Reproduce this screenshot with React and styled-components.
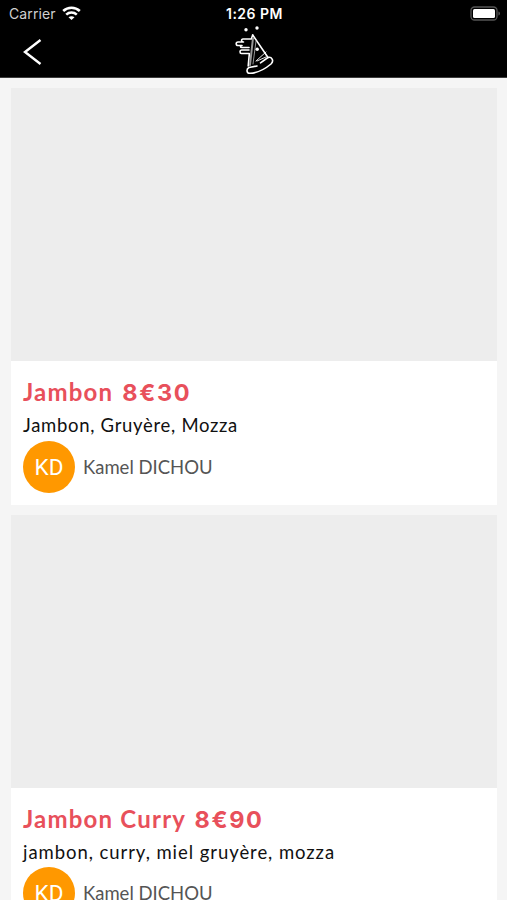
import React from 'react'
import styled, { createGlobalStyle } from 'styled-components'

const GlobalStyle = createGlobalStyle`
  * {
    box-sizing: border-box;
  }

  body {
    margin: 0;
    background: #f5f5f5;
    font-family: Lato, 'Liberation Sans', sans-serif;
  }
`

const Screen = styled.div`
  width: 100%;
  height: 900px;
  overflow: hidden;
  background: #f5f5f5;
`

const Header = styled.header`
  height: 78px;
  background: #000;
  border-bottom: 1px solid #3c3c3c;
`

const StatusBar = styled.div`
  display: grid;
  grid-template-columns: 1fr auto 1fr;
  align-items: center;
  height: 27px;
  padding: 0 7px 0 9px;
  font-family: Inter, 'Liberation Sans', sans-serif;
  color: #fff;
`

const Carrier = styled.div`
  display: flex;
  align-items: center;
  gap: 6px;
  font-size: 14px;
  letter-spacing: 0.1px;
  color: #d0d0d0;
`

const Time = styled.div`
  font-size: 14px;
  font-weight: 600;
  letter-spacing: 0.5px;
`

const Battery = styled.svg`
  justify-self: end;
`

const NavBar = styled.nav`
  display: grid;
  grid-template-columns: 1fr auto 1fr;
  height: 50px;
`

const BackButton = styled.button`
  justify-self: start;
  display: flex;
  padding: 11px 0 0 22px;
  border: 0;
  background: none;
`

const LogoMark = styled.svg`
  overflow: visible;
`

const List = styled.main`
  display: flex;
  flex-direction: column;
  gap: 10px;
  padding: 10px 10px 0 11px;
`

const Card = styled.article`
  background: #fff;
`

const Photo = styled.div`
  height: 273px;
  background: #ededed;
`

const Details = styled.div`
  height: 143.5px;
  padding: 15px 12px 0;
`

const Title = styled.h2`
  width: max-content;
  margin: 0;
  font-size: 24px;
  font-weight: 700;
  line-height: 32px;
  letter-spacing: 1.2px;
  color: #e8505b;
`

const Price = styled.span`
  margin-left: 2px;
  font-family: Inter, 'Liberation Sans', sans-serif;
  font-size: 23.5px;
  line-height: 1;
  letter-spacing: 1.6px;
`

const Ingredients = styled.p`
  width: max-content;
  margin: 5px 0 3.5px;
  font-size: 18.5px;
  line-height: 24px;
  letter-spacing: ${({ $spacing }) => $spacing}px;
  color: #111;
`

const Author = styled.div`
  display: flex;
  align-items: center;
  gap: 8px;
`

const Avatar = styled.div`
  display: flex;
  align-items: center;
  justify-content: center;
  width: 52px;
  height: 52px;
  border-radius: 50%;
  background: #ff9800;
  font-family: Roboto, 'Liberation Sans', sans-serif;
  font-size: 22.5px;
  font-weight: 400;
  color: #fff;
`

const AuthorName = styled.span`
  font-size: 18.5px;
  letter-spacing: 0;
  color: #555;
`

const pizzas = [
  { name: 'Jambon', price: '8€30', ingredients: 'Jambon, Gruyère, Mozza', spacing: 0.7 },
  { name: 'Jambon Curry', price: '8€90', ingredients: 'jambon, curry, miel gruyère, mozza', spacing: 0.94 },
]

function Wifi() {
  return (
    <svg width="19" height="15" viewBox="0 0 19 15" fill="none" stroke="#fff" strokeWidth="2.6">
      <path d="M1.2 5C5.8 .6 13.2 .6 17.8 5" />
      <path d="M4.2 8.6C7.2 5.8 11.8 5.8 14.8 8.6" />
      <path d="M6.5 11.2C8.2 9.8 10.8 9.8 12.5 11.2L9.5 14.1Z" fill="#fff" stroke="none" />
    </svg>
  )
}

function Logo() {
  return (
    <LogoMark width="44" height="51" viewBox="0 3 44 51" fill="none" stroke="#fff" strokeWidth="1.6" strokeLinecap="round" strokeLinejoin="round">
      <circle cx="14" cy="5.7" r="1.7" fill="#fff" stroke="none" />
      <circle cx="25" cy="4" r="1.7" fill="#fff" stroke="none" />
      {/* pizza slice */}
      <path d="M20.7 11L36 33.5M17.3 30L16.2 42" />
      {/* melted cheese */}
      <path d="M20.7 11L19.3 15H11C9 15 9 18 11.5 18H6C3.6 18 3.6 21.5 6 21.5H10C8 22 8 23.5 10 23.5H17M17 26H9.5C7.5 26 7.5 29.5 9.5 29.5H17.3" />
      <path d="M21 14L18 41" stroke="#999" strokeWidth="2" />
      <path d="M24 17L21 40" stroke="#bbb" strokeWidth="0.8" />
      <circle cx="25.2" cy="25.3" r="1.7" fill="#fff" stroke="none" />
      <path d="M24 37L34 28M25 37L34 33" strokeWidth="0.9" />
      {/* crust */}
      <path d="M25 42L17 43.5C14 45 14.5 49.5 18 49.3C25 49 33 45 39 40C42.5 36.5 39.5 32.5 36 33.5L28.5 38.8" />
    </LogoMark>
  )
}

function PizzaCard({ pizza }) {
  return (
    <Card>
      <Photo />
      <Details>
        <Title>
          {pizza.name} <Price>{pizza.price}</Price>
        </Title>
        <Ingredients $spacing={pizza.spacing}>{pizza.ingredients}</Ingredients>
        <Author>
          <Avatar>KD</Avatar>
          <AuthorName>Kamel DICHOU</AuthorName>
        </Author>
      </Details>
    </Card>
  )
}

export default function App() {
  return (
    <Screen>
      <GlobalStyle />
      <Header>
        <StatusBar>
          <Carrier>
            Carrier
            <Wifi />
          </Carrier>
          <Time>1:26 PM</Time>
          <Battery width="30" height="15" viewBox="0 0 30 15">
            <rect x="1" y="1" width="26" height="13" rx="3.5" fill="none" stroke="#555" strokeWidth="1.3" />
            <rect x="3" y="3" width="22" height="9" rx="1.5" fill="#fff" />
            <path d="M28.5 5.5C30.3 6.3 30.3 8.7 28.5 9.5Z" fill="#666" />
          </Battery>
        </StatusBar>
        <NavBar>
          <BackButton aria-label="Back">
            <svg width="20" height="28" viewBox="0 0 20 28" fill="none" stroke="#fff" strokeWidth="2.4">
              <path d="M18.5 2L3 14L18.5 26" />
            </svg>
          </BackButton>
          <Logo />
        </NavBar>
      </Header>
      <List>
        {pizzas.map((pizza) => (
          <PizzaCard key={pizza.name} pizza={pizza} />
        ))}
      </List>
    </Screen>
  )
}
